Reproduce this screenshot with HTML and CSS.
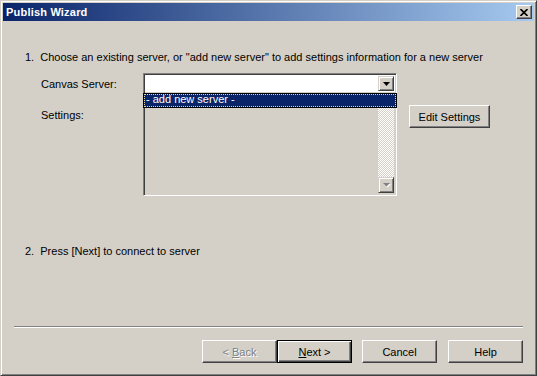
FILE: index.html
```html
<!DOCTYPE html>
<html lang="en">
<head>
  <meta charset="UTF-8" />
  <link rel="stylesheet" href="styles.css">
</head>
<body>

  <div class="window">
    <div class="titlebar">
      <span class="title">Publish Wizard</span>
      <button class="close">
        <svg width="8" height="7" viewBox="0 0 8 7"><path d="M0.5 0 L7.5 7 M7.5 0 L0.5 7" stroke="#000" stroke-width="1.6" fill="none"/></svg>
      </button>
    </div>

    <div class="content">
      <div class="main">
        <p class="step">1.&nbsp; Choose an existing server, or "add new server" to add settings information for a new server</p>

        <div class="form">
          <label class="label">Canvas Server:</label>
          <div class="combo">
            <div class="combo-field"></div>
            <span class="combo-btn">
              <svg width="7" height="4" viewBox="0 0 7 4"><polygon points="0,0 7,0 3.5,4" fill="#000"/></svg>
            </span>
            <!-- open dropdown -->
            <div class="popup"><span class="popup-item">- add new server -</span></div>
          </div>
          <span></span>

          <label class="label label-settings">Settings:</label>
          <div class="listbox">
            <div class="list-area"></div>
            <div class="scrollbar">
              <span class="scroll-btn">
                <svg width="9" height="6" viewBox="0 0 9 6"><polygon points="2,2 9,2 5.5,5.5" fill="#fff"/><polygon points="1,1 8,1 4.5,4.5" fill="#808080"/></svg>
              </span>
            </div>
          </div>
          <div class="side">
            <button class="btn edit-btn">Edit Settings</button>
          </div>
        </div>

        <p class="step step2">2.&nbsp; Press [Next] to connect to server</p>
      </div>

      <div class="sep"></div>

      <div class="actions">
        <button class="btn disabled">&lt; <u>B</u>ack</button>
        <button class="btn default"><u>N</u>ext &gt;</button>
        <button class="btn cancel">Cancel</button>
        <button class="btn help">Help</button>
      </div>
    </div>
  </div>

</body>
</html>
```

FILE: styles.css
```css
body {
  margin: 0;
  background: #d4d0c8;
  font-family: "Liberation Sans", Arial, sans-serif;
  font-size: 11px;
  color: #000;
}

.window {
  width: 537px;
  height: 376px;
  box-sizing: border-box;
  display: flex;
  flex-direction: column;
  padding: 2px;
  background: #d4d0c8;
  border: 1px solid;
  border-color: #d4d0c8 #404040 #404040 #d4d0c8;
  box-shadow: inset 1px 1px #fff, inset -1px -1px #808080;
}

.titlebar {
  height: 18px;
  display: flex;
  align-items: center;
  justify-content: space-between;
  padding: 0 2px 0 3px;
  background: linear-gradient(to right, #0a246a, #a6caf0);
}

.title {
  color: #fff;
  font-weight: bold;
  font-size: 11px;
  letter-spacing: 0.2px;
}

.close {
  width: 16px;
  height: 14px;
  padding: 0;
  display: flex;
  align-items: center;
  justify-content: center;
  background: #d4d0c8;
  border: 1px solid;
  border-color: #fff #404040 #404040 #fff;
  box-shadow: inset -1px -1px #808080;
}

.content {
  flex: 1;
  display: flex;
  flex-direction: column;
  padding: 0 11px;
}

.main {
  flex: 1;
}

.step {
  margin: 30px 0 0 11px;
  line-height: 13px;
}

.step2 {
  margin-top: 49px;
}

.form {
  display: grid;
  grid-template-columns: 90px 254px 81px;
  grid-template-rows: 21px 102px;
  column-gap: 12px;
  margin: 9px 0 0 27px;
}

.label {
  line-height: 13px;
  padding-top: 5px;
}

.label-settings {
  padding-top: 15px;
}

/* sunken field */
.combo,
.listbox {
  position: relative;
  display: flex;
  box-sizing: border-box;
  border: 1px solid;
  border-color: #808080 #fff #fff #808080;
  box-shadow: inset 1px 1px #404040, inset -1px -1px #d4d0c8;
  padding: 2px;
}

.combo {
  background: #fff;
}

.combo-field {
  flex: 1;
}

.combo-btn,
.scroll-btn {
  width: 16px;
  box-sizing: border-box;
  display: flex;
  align-items: center;
  justify-content: center;
  background: #d4d0c8;
  border: 1px solid;
  border-color: #d4d0c8 #404040 #404040 #d4d0c8;
  box-shadow: inset 1px 1px #fff, inset -1px -1px #808080;
}

.popup {
  position: absolute;
  left: -1px;
  right: -1px;
  top: 19px;
  height: 15px;
  box-sizing: border-box;
  border: 1px solid #000;
  background: #000;
  z-index: 2;
}

.popup-item {
  display: block;
  height: 13px;
  box-sizing: border-box;
  background: #0a246a;
  color: #fff;
  line-height: 11px;
  padding-left: 2px;
  outline: 1px dotted #e8d890;
  outline-offset: -1px;
}

.listbox {
  background: #d4d0c8;
}

.list-area {
  flex: 1;
}

.scrollbar {
  width: 16px;
  display: flex;
  flex-direction: column;
  justify-content: flex-end;
  background: repeating-conic-gradient(#fff 0 25%, #d4d0c8 0 50%) 0 0 / 2px 2px;
}

.scroll-btn {
  height: 16px;
}

.side {
  padding-top: 11px;
}

.btn {
  width: 75px;
  height: 23px;
  padding: 0;
  font-family: "Liberation Sans", Arial, sans-serif;
  font-size: 11px;
  color: #000;
  background: #d4d0c8;
  border: 1px solid;
  border-color: #fff #404040 #404040 #fff;
  box-shadow: inset -1px -1px #808080;
}

.edit-btn {
  width: 81px;
}

.btn.disabled {
  color: #808080;
  text-shadow: 1px 1px #fff;
}

.btn.default {
  border: 1px solid #000;
  box-shadow: inset 1px 1px #fff, inset -1px -1px #404040, inset -2px -2px #808080;
}

.sep {
  height: 1px;
  background: #808080;
  border-bottom: 1px solid #fff;
}

.actions {
  display: flex;
  justify-content: flex-end;
  padding: 12px 0 10px;
}

.cancel {
  margin-left: 10px;
}

.help {
  margin-left: 11px;
}
```
